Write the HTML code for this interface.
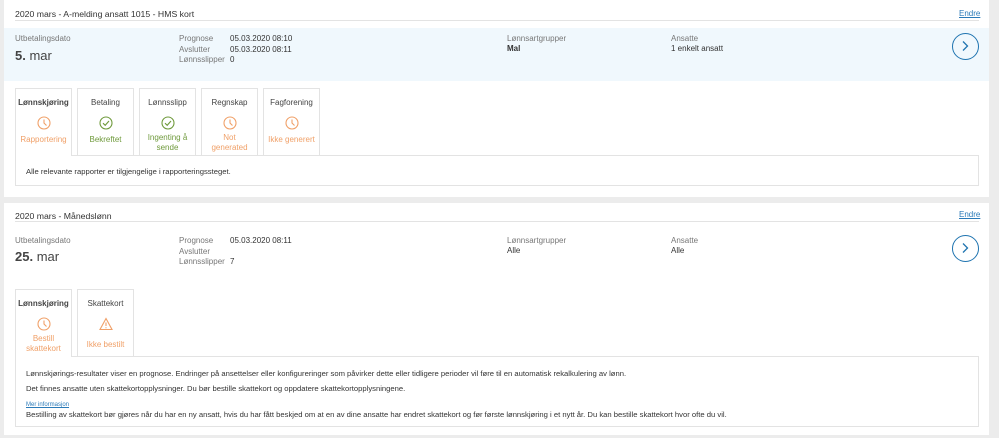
<!DOCTYPE html>
<html><head><style>
*{box-sizing:border-box;margin:0;padding:0}
body{width:999px;height:438px;background:#ececec;font-family:"Liberation Sans",sans-serif;color:#333;position:relative;overflow:hidden;font-size:8px}
.card{position:absolute;left:4px;width:985px;background:#fff}
.abs{position:absolute;white-space:nowrap}
.title{font-size:8.7px;color:#333}
.endre{font-size:8px;color:#2a7ab8;text-decoration:underline}
.line{position:absolute;left:11px;width:964px;height:1px;background:#e3e3e3}
.lbl{color:#777}
.circ{position:absolute;width:27px;height:27px;border:1.5px solid #1f74b0;border-radius:50%}
.tab{position:absolute;width:57px;height:68px;border:1px solid #e3e3e3;background:#fff;text-align:center}
.tab .h{position:absolute;top:9px;left:0;right:0;font-size:8px;color:#444}
.tab .ic{position:absolute;top:27px;left:21px}
.tab .s{position:absolute;top:46px;left:0;right:0;font-size:8px;line-height:10px}
.or{color:#f0a068}.gr{color:#6f9a3c}
.msg{position:absolute;left:11px;width:964px;border:1px solid #e3e3e3;background:#fff;font-size:7.65px}
</style></head><body>

<div class="card" style="top:0;height:197px">
 <div class="abs title" style="left:11px;top:9px">2020 mars - A-melding ansatt 1015 - HMS kort</div>
 <div class="abs endre" style="left:955px;top:9px">Endre</div>
 <div class="line" style="top:20px"></div>
 <div style="position:absolute;left:0;top:28px;width:985px;height:53px;background:#f0f8fd"></div>
 <div class="abs lbl" style="left:11px;top:34px">Utbetalingsdato</div>
 <div class="abs" style="left:11px;top:48px;font-size:13px;color:#444"><b style="font-weight:600">5.</b> mar</div>
 <div class="abs lbl" style="left:175px;top:34px;line-height:10.5px">Prognose<br>Avslutter<br>Lønnsslipper</div>
 <div class="abs" style="left:226px;top:34px;line-height:10.5px">05.03.2020 08:10<br>05.03.2020 08:11<br>0</div>
 <div class="abs lbl" style="left:503px;top:34px">Lønnsartgrupper</div>
 <div class="abs" style="left:503px;top:44px;font-weight:bold">Mal</div>
 <div class="abs lbl" style="left:667px;top:34px">Ansatte</div>
 <div class="abs" style="left:667px;top:44px">1 enkelt ansatt</div>
 <div class="circ" style="left:948px;top:33px"><svg width="24" height="24" style="position:absolute;left:0;top:0"><path d="M10 7.5L14.5 12L10 16.5" fill="none" stroke="#1f74b0" stroke-width="1.3"/></svg></div>

 <div class="msg" style="top:155px;height:31px"><div class="abs" style="left:10px;top:11px">Alle relevante rapporter er tilgjengelige i rapporteringssteget.</div></div>

 <div class="tab" style="left:11px;top:88px;border-bottom:none;height:68px"><div class="h" style="font-weight:bold">Lønnskjøring</div><svg class="ic" width="14" height="14"><circle cx="7" cy="7" r="6" fill="none" stroke="#f0a068" stroke-width="1.1"/><path d="M7 3.5V7L9.5 9.5" fill="none" stroke="#f0a068" stroke-width="1.1"/></svg><div class="s or">Rapportering</div></div>
 <div class="tab" style="left:73px;top:88px"><div class="h">Betaling</div><svg class="ic" width="14" height="14"><circle cx="7" cy="7" r="6" fill="none" stroke="#6f9a3c" stroke-width="1.1"/><path d="M4 7.2L6.2 9.3L10 5" fill="none" stroke="#6f9a3c" stroke-width="1.1"/></svg><div class="s gr">Bekreftet</div></div>
 <div class="tab" style="left:135px;top:88px"><div class="h">Lønnsslipp</div><svg class="ic" width="14" height="14"><circle cx="7" cy="7" r="6" fill="none" stroke="#6f9a3c" stroke-width="1.1"/><path d="M4 7.2L6.2 9.3L10 5" fill="none" stroke="#6f9a3c" stroke-width="1.1"/></svg><div class="s gr" style="top:44px">Ingenting å<br>sende</div></div>
 <div class="tab" style="left:197px;top:88px"><div class="h">Regnskap</div><svg class="ic" width="14" height="14"><circle cx="7" cy="7" r="6" fill="none" stroke="#f0a068" stroke-width="1.1"/><path d="M7 3.5V7L9.5 9.5" fill="none" stroke="#f0a068" stroke-width="1.1"/></svg><div class="s or" style="top:44px">Not<br>generated</div></div>
 <div class="tab" style="left:259px;top:88px"><div class="h">Fagforening</div><svg class="ic" width="14" height="14"><circle cx="7" cy="7" r="6" fill="none" stroke="#f0a068" stroke-width="1.1"/><path d="M7 3.5V7L9.5 9.5" fill="none" stroke="#f0a068" stroke-width="1.1"/></svg><div class="s or">Ikke generert</div></div>
</div>

<div class="card" style="top:203px;height:232px">
 <div class="abs title" style="left:11px;top:8px">2020 mars - Månedslønn</div>
 <div class="abs endre" style="left:955px;top:7px">Endre</div>
 <div class="line" style="top:18px"></div>
 <div class="abs lbl" style="left:11px;top:33px">Utbetalingsdato</div>
 <div class="abs" style="left:11px;top:46px;font-size:13px;color:#444"><b style="font-weight:600">25.</b> mar</div>
 <div class="abs lbl" style="left:175px;top:33px;line-height:10.5px">Prognose<br>Avslutter<br>Lønnsslipper</div>
 <div class="abs" style="left:226px;top:33px;line-height:10.5px">05.03.2020 08:11<br><br>7</div>
 <div class="abs lbl" style="left:503px;top:33px">Lønnsartgrupper</div>
 <div class="abs" style="left:503px;top:43px">Alle</div>
 <div class="abs lbl" style="left:667px;top:33px">Ansatte</div>
 <div class="abs" style="left:667px;top:43px">Alle</div>
 <div class="circ" style="left:948px;top:32px"><svg width="24" height="24" style="position:absolute;left:0;top:0"><path d="M10 7.5L14.5 12L10 16.5" fill="none" stroke="#1f74b0" stroke-width="1.3"/></svg></div>

 <div class="msg" style="top:153px;height:71px">
  <div class="abs" style="left:10px;top:12px">Lønnskjørings-resultater viser en prognose. Endringer på ansettelser eller konfigureringer som påvirker dette eller tidligere perioder vil føre til en automatisk rekalkulering av lønn.</div>
  <div class="abs" style="left:10px;top:27px">Det finnes ansatte uten skattekortopplysninger. Du bør bestille skattekort og oppdatere skattekortopplysningene.</div>
  <div class="abs" style="left:10px;top:45px;font-size:6px;color:#2a7ab8;text-decoration:underline">Mer informasjon</div>
  <div class="abs" style="left:10px;top:53px">Bestilling av skattekort bør gjøres når du har en ny ansatt, hvis du har fått beskjed om at en av dine ansatte har endret skattekort og før første lønnskjøring i et nytt år. Du kan bestille skattekort hvor ofte du vil.</div>
 </div>

 <div class="tab" style="left:11px;top:86px;border-bottom:none;height:68px"><div class="h" style="font-weight:bold">Lønnskjøring</div><svg class="ic" width="14" height="14"><circle cx="7" cy="7" r="6" fill="none" stroke="#f0a068" stroke-width="1.1"/><path d="M7 3.5V7L9.5 9.5" fill="none" stroke="#f0a068" stroke-width="1.1"/></svg><div class="s or" style="top:44px">Bestill<br>skattekort</div></div>
 <div class="tab" style="left:73px;top:86px"><div class="h">Skattekort</div><svg class="ic" width="14" height="14"><path d="M7 1.5L13 12.5H1Z" fill="none" stroke="#f0a068" stroke-width="1.1"/><path d="M7 5.5V9M7 10.3V11.3" stroke="#f0a068" stroke-width="1.1"/></svg><div class="s or" style="top:50px">Ikke bestilt</div></div>
</div>
</body></html>
